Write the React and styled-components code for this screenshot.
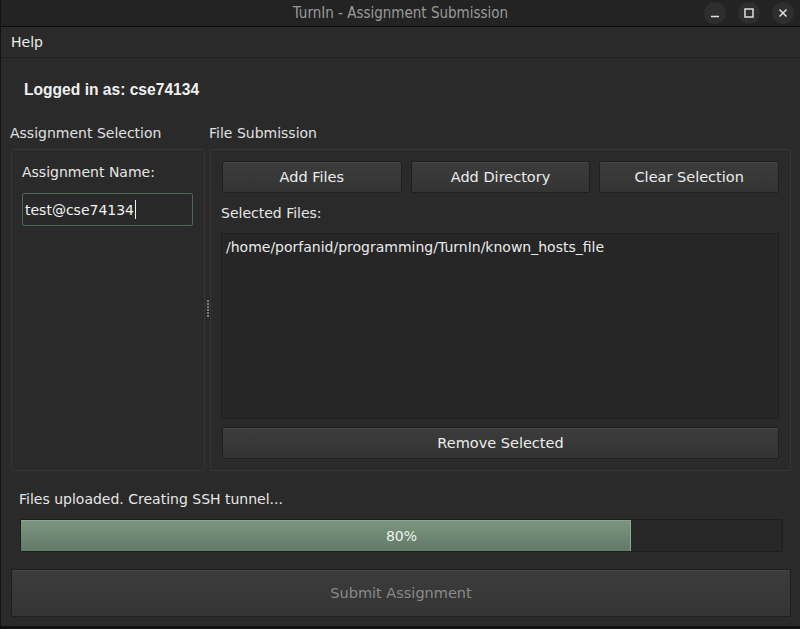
import React from 'react';
import styled, { createGlobalStyle } from 'styled-components';

const GlobalStyle = createGlobalStyle`
  html, body {
    margin: 0;
    padding: 0;
    background: #1a1a1a;
  }
  body {
    font-family: "DejaVu Sans", "Liberation Sans", sans-serif;
    font-size: 14px;
    color: #e6e6e6;
  }
`;

const Window = styled.div`
  width: 800px;
  height: 629px;
  display: flex;
  flex-direction: column;
  background: #2a2a2a;
  box-sizing: border-box;
  border-left: 1px solid #111;
  border-bottom: 3px solid #111;
  overflow: hidden;
`;

const TitleBar = styled.div`
  height: 26px;
  flex-shrink: 0;
  background: #232323;
  border-bottom: 1px solid #0c0c0c;
  display: flex;
  align-items: center;
  justify-content: center;
  position: relative;
  font-family: "DejaVu Sans Condensed", "DejaVu Sans", sans-serif;
  font-size: 15px;
  color: #9a9a9a;
`;

const WinControls = styled.div`
  position: absolute;
  right: 6px;
  top: 0;
  height: 26px;
  display: flex;
  align-items: center;
  gap: 12px;
`;

const WinButton = styled.div`
  width: 22px;
  height: 22px;
  border-radius: 50%;
  background: #2e2e2e;
  display: flex;
  align-items: center;
  justify-content: center;
`;

const MenuBar = styled.div`
  height: 30px;
  flex-shrink: 0;
  display: flex;
  align-items: center;
  padding-left: 10px;
  color: #ededed;
  border-bottom: 1px solid #222;
`;

const Body = styled.div`
  flex: 1;
  display: flex;
  flex-direction: column;
  padding: 0 9px 0 10px;
`;

const LoggedIn = styled.div`
  font-family: "Liberation Sans", Arial, sans-serif;
  font-weight: bold;
  font-size: 15.6px;
  color: #f0f0f0;
  padding: 23px 0 0 13px;
  height: 60px;
  box-sizing: border-box;
`;

const Groups = styled.div`
  display: flex;
  height: 352px;
  margin-top: 1px;
`;

const Group = styled.div`
  display: flex;
  flex-direction: column;
  ${({ $grow }) => ($grow ? 'flex: 1;' : 'width: 194px;')}
`;

const GroupTitle = styled.div`
  color: #e0e0e0;
  height: 30px;
  line-height: 28px;
  margin-left: -1px;
`;

const GroupBox = styled.div`
  flex: 1;
  border: 1px solid #363636;
  border-radius: 2px;
  display: flex;
  flex-direction: column;
  padding: ${({ $pad }) => $pad};
`;

const Splitter = styled.div`
  width: 5px;
  display: flex;
  align-items: center;
  justify-content: center;
  padding-top: 26px;
`;

const Grip = styled.div`
  display: flex;
  flex-direction: column;
  gap: 1px;
  span {
    width: 2px;
    height: 2px;
    background: #7a7a7a;
  }
`;

const FieldLabel = styled.div`
  color: #e6e6e6;
  height: 20px;
`;

const TextInput = styled.div`
  margin-top: 9px;
  height: 33px;
  width: 171px;
  box-sizing: border-box;
  border: 1px solid #4d6652;
  border-radius: 2px;
  background: #292929;
  display: flex;
  align-items: center;
  padding-left: 2px;
  color: #f2f2f2;
`;

const Caret = styled.span`
  display: inline-block;
  width: 1px;
  height: 19px;
  background: #f2f2f2;
  margin-left: 1px;
`;

const ButtonRow = styled.div`
  display: flex;
  gap: 9px;
  margin-top: ${({ $top }) => $top || 0}px;
`;

const Button = styled.div`
  flex: 1;
  height: ${({ $tall }) => ($tall ? '48px' : '32px')};
  box-sizing: border-box;
  border: 1px solid #1f1f1f;
  border-radius: 2px;
  background: linear-gradient(#3c3c3c, #343434);
  box-shadow: inset 0 1px 0 #454545;
  display: flex;
  align-items: center;
  justify-content: center;
  font-size: 14.5px;
  color: ${({ $disabled }) => ($disabled ? '#8a8a8a' : '#ececec')};
`;

const ListLabel = styled.div`
  color: #e6e6e6;
  margin: 12px 0 10px -1px;
  height: 18px;
`;

const FileList = styled.div`
  height: 186px;
  box-sizing: border-box;
  border: 1px solid #1e1e1e;
  background: #262626;
  padding: 5px 4px;
  color: #eaeaea;
  margin-left: -1px;
`;

const Status = styled.div`
  color: #e6e6e6;
  margin: 20px 0 0 8px;
  height: 19px;
`;

const Progress = styled.div`
  margin: 9px 8px 0 9px;
  height: 33px;
  box-sizing: border-box;
  border: 1px solid #1e1e1e;
  border-radius: 2px;
  background: #272727;
  position: relative;
  display: flex;
`;

const ProgressFill = styled.div`
  background: linear-gradient(#7b9681, #627a68);
  border-right: 1px solid #8fa893;
  box-shadow: inset 0 1px 0 #8aa38f;
`;

const ProgressText = styled.div`
  position: absolute;
  inset: 0;
  display: flex;
  align-items: center;
  justify-content: center;
  color: #eef2ee;
`;

const SubmitWrap = styled.div`
  margin-top: 17px;
  display: flex;
`;

export default function App() {
  const percent = 80;
  return (
    <>
      <GlobalStyle />
      <Window>
        <TitleBar>
          TurnIn - Assignment Submission
          <WinControls>
            <WinButton>
              <svg width="10" height="10" viewBox="0 0 10 10">
                <path d="M1 8.5h8" stroke="#e0e0e0" strokeWidth="1.5" />
              </svg>
            </WinButton>
            <WinButton>
              <svg width="10" height="10" viewBox="0 0 10 10">
                <rect x="1" y="1" width="8" height="8" fill="none" stroke="#e0e0e0" strokeWidth="1.5" />
              </svg>
            </WinButton>
            <WinButton>
              <svg width="10" height="10" viewBox="0 0 10 10">
                <path d="M1.5 1.5l7 7M8.5 1.5l-7 7" stroke="#e0e0e0" strokeWidth="1.5" />
              </svg>
            </WinButton>
          </WinControls>
        </TitleBar>
        <MenuBar>Help</MenuBar>
        <Body>
          <LoggedIn>Logged in as: cse74134</LoggedIn>
          <Groups>
            <Group>
              <GroupTitle>Assignment Selection</GroupTitle>
              <GroupBox $pad="14px 10px 0 10px">
                <FieldLabel>Assignment Name:</FieldLabel>
                <TextInput>
                  test@cse74134<Caret />
                </TextInput>
              </GroupBox>
            </Group>
            <Splitter>
              <Grip>
                <span /><span /><span /><span /><span /><span />
              </Grip>
            </Splitter>
            <Group $grow>
              <GroupTitle>File Submission</GroupTitle>
              <GroupBox $pad="11px 11px 0 11px">
                <ButtonRow>
                  <Button>Add Files</Button>
                  <Button>Add Directory</Button>
                  <Button>Clear Selection</Button>
                </ButtonRow>
                <ListLabel>Selected Files:</ListLabel>
                <FileList>/home/porfanid/programming/TurnIn/known_hosts_file</FileList>
                <ButtonRow $top={8}>
                  <Button>Remove Selected</Button>
                </ButtonRow>
              </GroupBox>
            </Group>
          </Groups>
          <Status>Files uploaded. Creating SSH tunnel...</Status>
          <Progress>
            <ProgressFill style={{ width: `${percent}%` }} />
            <ProgressText>{percent}%</ProgressText>
          </Progress>
          <SubmitWrap>
            <Button $tall $disabled>Submit Assignment</Button>
          </SubmitWrap>
        </Body>
      </Window>
    </>
  );
}
